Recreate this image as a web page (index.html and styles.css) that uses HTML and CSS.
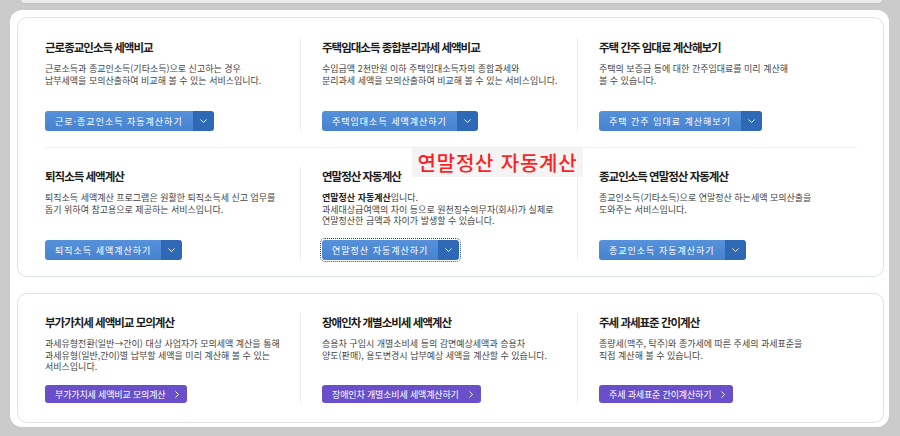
FILE: index.html
```html
<!DOCTYPE html>
<html lang="ko">
<head>
<meta charset="utf-8">
<title>세액계산 서비스</title>
<link rel="stylesheet" href="styles.css">
</head>
<body>
<div class="prev"></div>
<div class="panel">
  <section class="card card-main">
    <div class="row">
      <div class="col">
        <h3 class="title">근로종교인소득 세액비교</h3>
        <p class="desc">근로소득과 종교인소득(기타소득)으로 신고하는 경우<br>납부세액을 모의산출하여 비교해 볼 수 있는 서비스입니다.</p>
        <div class="split"><span class="split-main">근로·종교인소득 자동계산하기</span><span class="split-arrow"><svg width="7" height="4" viewBox="0 0 7 4"><path d="M0.5 0.5 L3.5 3.5 L6.5 0.5" fill="none" stroke="#fff" stroke-width="1"/></svg></span></div>
      </div>
      <div class="col">
        <h3 class="title">주택임대소득 종합분리과세 세액비교</h3>
        <p class="desc">수입금액 2천만원 이하 주택임대소득자의 종합과세와<br>분리과세 세액을 모의산출하여 비교해 볼 수 있는 서비스입니다.</p>
        <div class="split"><span class="split-main">주택임대소득 세액계산하기</span><span class="split-arrow"><svg width="7" height="4" viewBox="0 0 7 4"><path d="M0.5 0.5 L3.5 3.5 L6.5 0.5" fill="none" stroke="#fff" stroke-width="1"/></svg></span></div>
      </div>
      <div class="col">
        <h3 class="title">주택 간주 임대료 계산해보기</h3>
        <p class="desc">주택의 보증금 등에 대한 간주임대료를 미리 계산해<br>볼 수 있습니다.</p>
        <div class="split"><span class="split-main">주택 간주 임대료 계산해보기</span><span class="split-arrow"><svg width="7" height="4" viewBox="0 0 7 4"><path d="M0.5 0.5 L3.5 3.5 L6.5 0.5" fill="none" stroke="#fff" stroke-width="1"/></svg></span></div>
      </div>
    </div>
    <hr class="sep">
    <div class="row">
      <div class="col">
        <h3 class="title">퇴직소득 세액계산</h3>
        <p class="desc">퇴직소득 세액계산 프로그램은 원활한 퇴직소득세 신고 업무를<br>돕기 위하여 참고용으로 제공하는 서비스입니다.</p>
        <div class="split"><span class="split-main">퇴직소득 세액계산하기</span><span class="split-arrow"><svg width="7" height="4" viewBox="0 0 7 4"><path d="M0.5 0.5 L3.5 3.5 L6.5 0.5" fill="none" stroke="#fff" stroke-width="1"/></svg></span></div>
      </div>
      <div class="col">
        <h3 class="title">연말정산 자동계산</h3>
        <p class="desc"><b>연말정산 자동계산</b>입니다.<br>과세대상급여액의 차이 등으로 원천징수의무자(회사)가 실제로<br>연말정산한 금액과 차이가 발생할 수 있습니다.</p>
        <div class="split focus"><span class="split-main">연말정산 자동계산하기</span><span class="split-arrow"><svg width="7" height="4" viewBox="0 0 7 4"><path d="M0.5 0.5 L3.5 3.5 L6.5 0.5" fill="none" stroke="#fff" stroke-width="1"/></svg></span></div>
      </div>
      <div class="col">
        <h3 class="title">종교인소득 연말정산 자동계산</h3>
        <p class="desc">종교인소득(기타소득)으로 연말정산 하는세액 모의산출을<br>도와주는 서비스입니다.</p>
        <div class="split"><span class="split-main">종교인소득 자동계산하기</span><span class="split-arrow"><svg width="7" height="4" viewBox="0 0 7 4"><path d="M0.5 0.5 L3.5 3.5 L6.5 0.5" fill="none" stroke="#fff" stroke-width="1"/></svg></span></div>
      </div>
    </div>
    <div class="note">연말정산 자동계산</div>
  </section>
  <section class="card card-sub">
    <div class="row row-sub">
      <div class="col">
        <h3 class="title">부가가치세 세액비교 모의계산</h3>
        <p class="desc">과세유형전환(일반→간이) 대상 사업자가 모의세액 계산을 통해<br>과세유형(일반,간이)별 납부할 세액을 미리 계산해 볼 수 있는<br>서비스입니다.</p>
        <a class="go">부가가치세 세액비교 모의계산<svg width="4" height="7" viewBox="0 0 4 7"><path d="M0.5 0.5 L3.5 3.5 L0.5 6.5" fill="none" stroke="#fff" stroke-width="1"/></svg></a>
      </div>
      <div class="col">
        <h3 class="title">장애인차 개별소비세 세액계산</h3>
        <p class="desc">승용차 구입시 개별소비세 등의 감면예상세액과 승용차<br>양도(판매), 용도변경시 납부예상 세액을 계산할 수 있습니다.</p>
        <a class="go">장애인차 개별소비세 세액계산하기<svg width="4" height="7" viewBox="0 0 4 7"><path d="M0.5 0.5 L3.5 3.5 L0.5 6.5" fill="none" stroke="#fff" stroke-width="1"/></svg></a>
      </div>
      <div class="col">
        <h3 class="title">주세 과세표준 간이계산</h3>
        <p class="desc">종량세(맥주, 탁주)와 종가세에 따른 주세의 과세표준을<br>직접 계산해 볼 수 있습니다.</p>
        <a class="go">주세 과세표준 간이계산하기<svg width="4" height="7" viewBox="0 0 4 7"><path d="M0.5 0.5 L3.5 3.5 L0.5 6.5" fill="none" stroke="#fff" stroke-width="1"/></svg></a>
      </div>
    </div>
  </section>
</div>
</body>
</html>
```
FILE: styles.css
```css
* { box-sizing: border-box; }
html, body { margin: 0; }
body {
  background: #cbcbcb;
  font-family: "Noto Sans CJK KR", "Noto Sans", sans-serif;
  width: 900px;
  height: 436px;
  overflow: hidden;
}
.prev {
  height: 4px;
  margin: 0 17px 6px 20px;
  background: #ececec;
  border: 1px solid #c0c0c0;
  border-top: 0;
  border-radius: 0 0 6px 6px;
}
.panel {
  margin-left: 10px;
  width: 879px;
  background: #fff;
  border-radius: 12px;
  padding: 7px 5px 4px 7px;
  display: flex;
  flex-direction: column;
  gap: 16px;
}
.card {
  border: 1px solid #dde2e5;
  border-radius: 10px;
  padding: 20px 26px 16px 27px;
  position: relative;
}
.card-sub { padding: 19px 26px 19px 27px; }
.row {
  display: grid;
  grid-template-columns: 255px 277px 1fr;
  min-height: 93px;
}
.row-sub { min-height: 90px; }
.col {
  display: flex;
  flex-direction: column;
  align-items: flex-start;
}
.col + .col {
  border-left: 1px solid #ececec;
  padding-left: 21px;
}
.title {
  margin: 0;
  font-size: 11.5px;
  line-height: 18px;
  font-weight: 700;
  letter-spacing: -1px;
  color: #1c1c1c;
  white-space: nowrap;
}
.desc {
  margin: 7px 0 11px;
  font-size: 9px;
  line-height: 11.5px;
  color: #444;
  white-space: nowrap;
}
.desc b { font-weight: 700; color: #222; }
.sep {
  margin: 16px 0 19px;
  border: 0;
  height: 1px;
  background: #efefef;
}
.split {
  margin-top: auto;
  display: flex;
  height: 20px;
  border-radius: 3px;
  overflow: hidden;
  color: #fff;
  font-size: 9px;
  letter-spacing: 1px;
}
.split-main {
  display: flex;
  align-items: center;
  padding: 0 10px;
  background: linear-gradient(#5691db, #4782cf);
  white-space: nowrap;
}
.split-arrow {
  width: 21px;
  display: flex;
  align-items: center;
  justify-content: center;
  background: #2f69b5;
}
.focus {
  overflow: visible;
  outline: 1px dotted #27486f;
  outline-offset: 1px;
}
.focus .split-main { border-radius: 3px 0 0 3px; }
.focus .split-arrow { border-radius: 0 3px 3px 0; }
.go {
  margin-top: auto;
  display: inline-flex;
  align-items: center;
  gap: 10px;
  height: 18px;
  padding: 0 8px 0 10px;
  background: #6a4fcb;
  color: #fff;
  border-radius: 3px;
  font-size: 9px;
  letter-spacing: -0.15px;
  white-space: nowrap;
}
.note {
  position: absolute;
  left: 394px;
  top: 130px;
  width: 171px;
  height: 29px;
  line-height: 29px;
  text-align: center;
  font-size: 20px;
  font-weight: 500;
  color: #ff1f1f;
  background: #f4f4f4;
  letter-spacing: 0.8px;
}
```
